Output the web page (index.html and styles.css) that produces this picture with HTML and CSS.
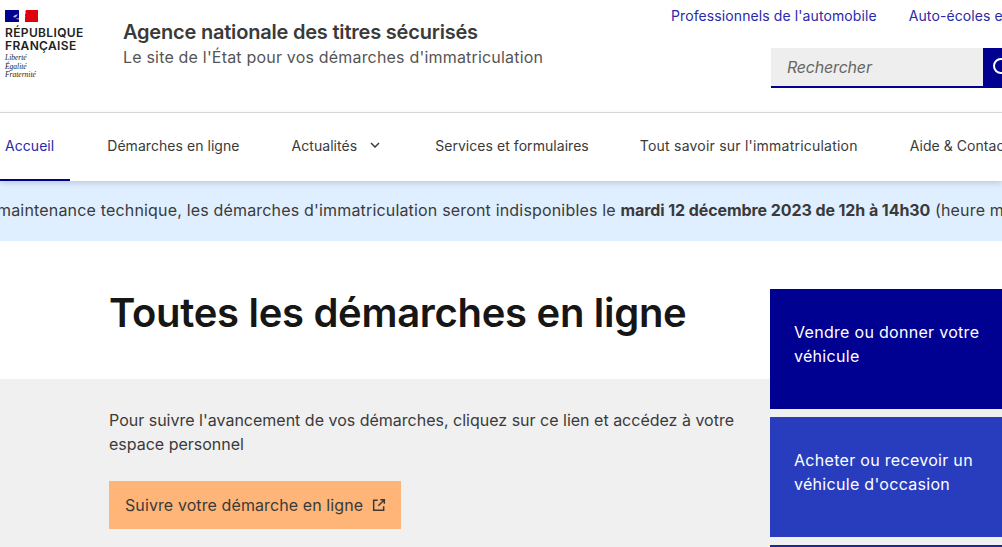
FILE: index.html
```html
<!DOCTYPE html>
<html lang="fr">
<head>
<meta charset="utf-8">
<title>Toutes les démarches en ligne - ANTS</title>
<link rel="stylesheet" href="styles.css">
</head>
<body>
<header class="header">
  <div class="brand">
    <svg class="flag" viewBox="0 0 33 12" width="33" height="12" aria-hidden="true">
      <rect width="33" height="12" fill="#fff"/>
      <rect width="14" height="12" fill="#000091"/>
      <rect x="20" width="13" height="12" fill="#e1000f"/>
      <path d="M8 6.500l2.200-1.400 2.800-.8-1 1.400-1 1.500-1.700.2z" fill="#b8b8e0"/>
      <path d="M10.500 9l1.500-.7 2-.3v1.500z" fill="#8f8fd0"/>
      <path d="M14 0h7l-.6 1.400.2 2-.9 1.600.7 1.600-1 .6.3 1.600-1.400.9 1 1.500 1.100 1.300H14z" fill="#fff"/>
    </svg>
    <p class="rf">RÉPUBLIQUE<br>FRANÇAISE</p>
    <p class="motto">Liberté<br>Égalité<br>Fraternité</p>
  </div>
  <div class="service">
    <p class="service-name">Agence nationale des titres sécurisés</p>
    <p class="service-tag">Le site de l'État pour vos démarches d'immatriculation</p>
  </div>
  <div class="tools">
    <div class="tool-links">
      <a href="#">Professionnels de l'automobile</a>
      <a href="#">Auto-écoles et centres</a>
    </div>
    <form class="search">
      <span class="search-input">Rechercher</span>
      <span class="search-btn">
        <svg viewBox="0 0 24 24" width="24" height="24" aria-hidden="true"><circle cx="11" cy="11" r="7" fill="none" stroke="#fff" stroke-width="2"/><path d="M16 16l5 5" stroke="#fff" stroke-width="2"/></svg>
      </span>
    </form>
  </div>
</header>
<nav class="nav">
  <a class="nav-item is-active" href="#">Accueil</a>
  <a class="nav-item" href="#">Démarches en ligne</a>
  <a class="nav-item" href="#">Actualités
    <svg class="chev" viewBox="0 0 10 6" width="10" height="6" aria-hidden="true"><path d="M1 1l4 4 4-4" fill="none" stroke="#3a3a3a" stroke-width="1.500"/></svg>
  </a>
  <a class="nav-item" href="#">Services et formulaires</a>
  <a class="nav-item nav-item-wide" href="#">Tout savoir sur l'immatriculation</a>
  <a class="nav-item" href="#">Aide &amp; Contact</a>
</nav>
<div class="notice">
  <p>maintenance technique, les démarches d'immatriculation seront indisponibles le <strong>mardi 12 décembre 2023 de 12h à 14h30</strong> (heure métropolitaine).</p>
</div>
<main class="main">
  <div class="col">
    <h1 class="title">Toutes les démarches en ligne</h1>
    <section class="follow">
      <p class="follow-text">Pour suivre l'avancement de vos démarches, cliquez sur ce lien et accédez à votre espace personnel</p>
      <a class="follow-btn" href="#">Suivre votre démarche en ligne
        <svg viewBox="0 0 24 24" width="16" height="16" aria-hidden="true"><path d="M10 5H4v15h15v-6M14 4h6v6M20 4l-9 9" fill="none" stroke="#3a3a3a" stroke-width="2.200"/></svg>
      </a>
    </section>
  </div>
  <aside class="side">
    <a class="card card-a" href="#">Vendre ou donner votre véhicule</a>
    <a class="card card-b" href="#">Acheter ou recevoir un véhicule d'occasion</a>
    <a class="card card-c" href="#">Immatriculer</a>
  </aside>
</main>
</body>
</html>
```
FILE: styles.css
```css
* { box-sizing: border-box; }
html, body { margin: 0; height: 547px; overflow: hidden; }
body { width: 1002px; background: #fff; color: #3a3a3a; font-family: "Inter", "Noto Sans", sans-serif; }
p, h1 { margin: 0; }
a { color: inherit; text-decoration: none; }

.header { height: 113px; border-bottom: 1px solid #ddd; display: flex; padding-left: 5px; white-space: nowrap; }
.brand { width: 118px; padding-top: 10px; flex: none; }
.flag { display: block; }
.rf { margin-top: 4px; font-size: 12px; line-height: 13px; font-weight: 600; letter-spacing: .35px; color: #222; }
.motto { margin-top: 2px; font-family: "Liberation Serif", serif; font-style: italic; font-size: 7.500px; line-height: 8.500px; color: #222; }
.service { padding-top: 20px; width: 548px; flex: none; }
.service-name { font-size: 20px; line-height: 24px; font-weight: 600; letter-spacing: -.2px; color: #3a3a3a; }
.service-tag { margin-top: 1px; font-size: 16px; line-height: 24px; letter-spacing: .19px; color: #555; }
.tools { flex: none; }
.tool-links { display: flex; gap: 32px; padding-top: 6px; height: 48px; font-size: 14px; line-height: 20px; letter-spacing: .1px; color: #2a2aa8; }
.search { display: flex; height: 40px; width: 260px; margin-left: 100px; }
.search-input { width: 212px; background: #eee; border-bottom: 2px solid #000091; padding: 0 16px; font-style: italic; font-size: 16px; line-height: 38px; letter-spacing: -.2px; color: #666; }
.search-btn { width: 48px; height: 40px; padding: 0 0 2px 7px; background: #000091; display: flex; align-items: center; }

.nav { position: relative; height: 68px; display: flex; white-space: nowrap; font-size: 14px; letter-spacing: .05px; color: #3a3a3a; box-shadow: 0 2px 6px rgba(0,0,0,.16); background: #fff; z-index: 1; }
.nav-item { display: flex; align-items: center; gap: 13px; padding: 0 26px 4px; height: 68px; }
.nav-item-wide { letter-spacing: .22px; margin-left: -1px; }
.nav-item.is-active { color: #2a2aa8; padding: 0 16px 2px 5px; margin-right: 11px; border-bottom: 2px solid #000091; }
.chev { margin-right: 3px; }

.notice { height: 60px; background: #dfefff; overflow: hidden; white-space: nowrap; font-size: 16px; line-height: 58px; letter-spacing: .175px; }
.notice p { margin-left: -3px; }
.notice strong { letter-spacing: -.08px; }

.main { display: flex; height: 306px; background: linear-gradient(#fff 138px, #f0f0f0 138px); }
.col { width: 770px; flex: none; }
.title { padding: 48px 0 0 109px; height: 138px; font-size: 40px; line-height: 48px; font-weight: 600; letter-spacing: -.3px; color: #161616; }
.follow { padding: 29px 24px 0 109px; }
.follow-text { font-size: 16px; line-height: 24px; }
.follow-btn { display: inline-flex; align-items: center; gap: 8px; height: 48px; margin-top: 25px; padding: 0 14px 0 16px; background: #ffb577; font-size: 16px; letter-spacing: .1px; white-space: nowrap; }
.side { width: 232px; flex: none; padding-top: 48px; display: flex; flex-direction: column; gap: 8px; }
.card { display: block; flex: none; height: 120px; padding: 31px 16px 0 24px; width: 240px; color: #fff; font-size: 16px; line-height: 24px; letter-spacing: .3px; }
.card-a { background: #000091; }
.card-b { background: #273dbd; }
.card-c { background: #1b2a8f; }
```
